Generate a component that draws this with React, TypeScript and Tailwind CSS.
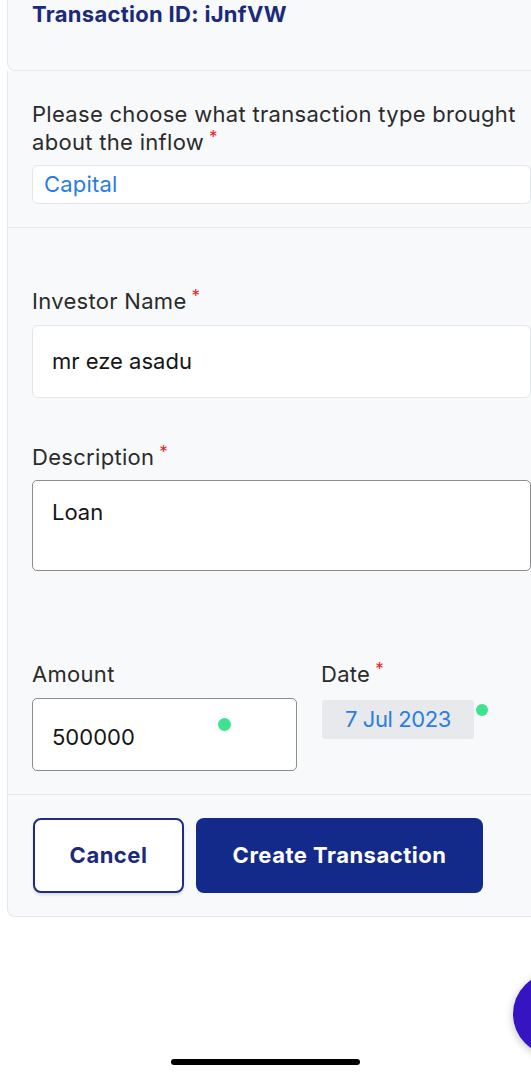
import React from 'react';

const font = { fontFamily: 'Inter, "Noto Sans", sans-serif' };

const Req: React.FC = () => (
  <span className="ml-[5px] inline-block align-top text-[17px] leading-[18px] text-[#e5231d]">*</span>
);

const Dot: React.FC<{ className?: string }> = ({ className = '' }) => (
  <span className={`absolute rounded-full bg-[#3ee38f] ${className}`} />
);

const Label: React.FC<{ children: React.ReactNode; required?: boolean }> = ({ children, required }) => (
  <label className="block text-[22px] leading-[28px] tracking-[0.3px] text-[#2b2b2b]">
    {children}
    {required && <Req />}
  </label>
);

const App: React.FC = () => {
  return (
    <div className="relative h-[1080px] w-full overflow-hidden bg-white" style={font}>
      <div className="pl-[7px]">
        {/* Header card */}
        <div className="h-[71px] rounded-bl-[8px] border-b border-l border-[#e4e7eb] bg-[#f8f9fb] pl-[24px]">
          <h1 className="text-[22px] leading-[28px] font-bold tracking-[0.3px] text-[#1b2a7a]">
            Transaction ID: iJnfVW
          </h1>
        </div>

        {/* Form card */}
        <div className="rounded-bl-[8px] border-b border-l border-[#e4e7eb] bg-[#f8f9fb]">
          {/* Transaction type */}
          <div className="flex flex-col gap-[9px] border-b border-[#e4e7eb] pt-[29px] pb-[23px] pl-[24px]">
            <p className="text-[22px] leading-[28px] tracking-[0.3px] text-[#2b2b2b]">
              Please choose what transaction type brought about the inflow
              <Req />
            </p>
            <div className="flex h-[39px] items-center rounded-[6px] border border-[#e2e5ea] bg-white pl-[11px]">
              <span className="text-[22px] tracking-[0.2px] text-[#2a7de1]">Capital</span>
            </div>
          </div>

          {/* Details */}
          <div className="flex flex-col border-b border-[#e4e7eb] pt-[59px] pb-[23px] pl-[24px]">
            <div className="flex flex-col gap-[10px]">
              <Label required>Investor Name</Label>
              <div className="flex h-[73px] items-center rounded-[6px] border border-[#e2e5ea] bg-white pl-[19px]">
                <span className="text-[22px] text-[#161616]">mr eze asadu</span>
              </div>
            </div>

            <div className="mt-[45px] flex flex-col gap-[9px]">
              <Label required>Description</Label>
              <div className="h-[91px] rounded-[5px] border-[1.5px] border-[#8c8c8c] bg-white pt-[17px] pl-[19px]">
                <span className="text-[22px] leading-[28px] text-[#161616]">Loan</span>
              </div>
            </div>

            <div className="mt-[89px] flex">
              <div className="flex w-[289px] flex-col gap-[10px]">
                <Label>Amount</Label>
                <div className="relative flex h-[73px] w-[265px] items-center rounded-[5px] border-[1.5px] border-[#8c8c8c] bg-white pt-[6px] pl-[19px]">
                  <span className="text-[22px] text-[#161616]">500000</span>
                  <Dot className="top-[19px] left-[185px] h-[13px] w-[13px]" />
                </div>
              </div>
              <div className="flex flex-col gap-[12px]">
                <Label required>Date</Label>
                <div className="relative ml-[1px] flex h-[39px] w-[152px] items-center justify-center rounded-[3px] bg-[#e8e9ec]">
                  <span className="text-[22px] tracking-[-0.4px] text-[#2a7de1]">7 Jul 2023</span>
                  <Dot className="top-[4px] -right-[14px] h-[12px] w-[12px]" />
                </div>
              </div>
            </div>
          </div>

          {/* Actions */}
          <div className="flex gap-[12px] py-[23px] pl-[25px]">
            <button className="h-[75px] w-[151px] rounded-[8px] border-2 border-[#1e2c82] bg-white text-[22px] font-bold tracking-[0.5px] text-[#1b2a7a] shadow-[0_2px_3px_rgba(0,0,0,0.12)]">
              Cancel
            </button>
            <button className="h-[75px] w-[287px] rounded-[8px] bg-[#142a8b] text-[22px] font-bold tracking-[0.5px] text-white">
              Create Transaction
            </button>
          </div>
        </div>
      </div>

      {/* Floating action button */}
      <div className="absolute top-[973px] left-[513px] h-[82px] w-[82px] rounded-full bg-[#3714c2] shadow-[0_2px_8px_rgba(0,0,0,0.25)]" />

      {/* Home indicator */}
      <div className="absolute top-[1059px] left-[171px] h-[6px] w-[189px] rounded-full bg-black" />
    </div>
  );
};

export default App;
